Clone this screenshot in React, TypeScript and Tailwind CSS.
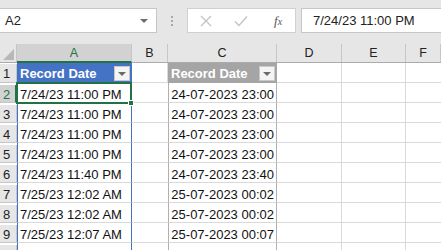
import React from "react";

const font = "font-['Liberation_Sans',Arial,sans-serif]";

const letters = ["A", "B", "C", "D", "E", "F"];

const data: [string, string][] = [
  ["7/24/23 11:00 PM", "24-07-2023 23:00"],
  ["7/24/23 11:00 PM", "24-07-2023 23:00"],
  ["7/24/23 11:00 PM", "24-07-2023 23:00"],
  ["7/24/23 11:00 PM", "24-07-2023 23:00"],
  ["7/24/23 11:40 PM", "24-07-2023 23:40"],
  ["7/25/23 12:02 AM", "25-07-2023 00:02"],
  ["7/25/23 12:02 AM", "25-07-2023 00:02"],
  ["7/25/23 12:07 AM", "25-07-2023 00:07"],
  ["7/25/23 12:07 AM", ""],
];

function Caret({ className = "" }: { className?: string }) {
  return (
    <svg width="8" height="4" viewBox="0 0 8 4" className={className}>
      <polygon points="0,0 8,0 4,4" fill="currentColor" />
    </svg>
  );
}

function FilterButton() {
  return (
    <div className="ml-auto mr-[2px] mb-[2px] w-[16px] h-[15px] bg-[#f4f4f4] border border-[#c8c8c8] flex items-center justify-center text-[#6a6a6a]">
      <Caret />
    </div>
  );
}

function TopBar() {
  return (
    <div className="h-[44px] bg-[#e6e6e6] flex items-start pt-[8px]">
      <div className="w-[157px] h-[25px] bg-white border-y border-r border-[#c6c6c6] flex items-center pl-[5px] pr-[8px]">
        <span className="text-[13px] text-[#222]">A2</span>
        <Caret className="ml-auto text-[#6d6d6d]" />
      </div>
      <div className="w-[30px] h-[25px] flex flex-col items-center justify-center gap-[2px]">
        <div className="w-[2px] h-[2px] bg-[#a8a8a8]" />
        <div className="w-[2px] h-[2px] bg-[#a8a8a8]" />
        <div className="w-[2px] h-[2px] bg-[#a8a8a8]" />
      </div>
      <div className="w-[109px] h-[25px] bg-white border border-[#d0d0d0] flex items-center">
        <svg width="12" height="12" viewBox="0 0 12 12" className="ml-[12px]">
          <path d="M1 1 L11 11 M11 1 L1 11" stroke="#c4c4c4" strokeWidth="1.4" />
        </svg>
        <svg width="14" height="12" viewBox="0 0 14 12" className="ml-[22px]">
          <path d="M1 6.5 L5 10.5 L13 1.5" stroke="#c4c4c4" strokeWidth="1.4" fill="none" />
        </svg>
        <span className="ml-[26px] text-[13px] italic font-['Liberation_Serif',serif] text-[#555]">
          f<span className="text-[10px]">x</span>
        </span>
      </div>
      <div className="ml-[5px] flex-1 h-[25px] bg-white border-y border-l border-[#c6c6c6] flex items-center pl-[11px]">
        <span className="text-[13px] text-[#222]">7/24/23 11:00 PM</span>
      </div>
    </div>
  );
}

function HeaderRow() {
  const widths = ["w-[115px]", "w-[36px]", "w-[109px]", "w-[65px]", "w-[64px]", "flex-1"];
  return (
    <div className="flex h-[19px] bg-[#e6e6e6] border-b border-[#ababab] text-[12.5px] leading-[19px]">
      <div className="w-[17px] border-r border-[#c6c6c6] relative">
        <svg width="11" height="11" viewBox="0 0 11 11" className="absolute right-[2px] bottom-[2px]">
          <polygon points="11,0 11,11 0,11" fill="#b8b8b8" />
        </svg>
      </div>
      {letters.map((l, i) =>
        i === 0 ? (
          <div key={l} className={`${widths[i]} bg-[#d2d2d2] border-r border-[#c6c6c6] border-b-2 border-b-[#217346] text-center text-[#217346] -mb-px`}>
            {l}
          </div>
        ) : (
          <div key={l} className={`${widths[i]} border-r border-[#c6c6c6] text-center text-[#222]`}>
            {l}
          </div>
        )
      )}
    </div>
  );
}

function RowHead({ n, active }: { n: number; active?: boolean }) {
  return active ? (
    <div className="w-[17px] bg-[#d2d2d2] border-b border-[#c6c6c6] border-r-2 border-r-[#217346] pl-[3px] text-[#217346]">
      {n}
    </div>
  ) : (
    <div className="w-[17px] bg-[#e6e6e6] border-b border-r border-[#c6c6c6] pl-[3px] text-[#222]">{n}</div>
  );
}

function Grid() {
  return (
    <div className="text-[13px] leading-[19px]">
      <div className="flex h-[20px] pt-[1px]">
        <RowHead n={1} />
        <div className="w-[115px] bg-[#4472c4] text-white font-bold pl-[3px] flex items-end -mt-[1px] pt-[1px]">
          <span className="self-start">Record Date</span>
          <FilterButton />
        </div>
        <div className="w-[36px] border-b border-r border-[#d9d9d9] -mt-[1px]" />
        <div className="w-[109px] bg-[#a5a5a5] text-white font-bold pl-[3px] flex items-end -mt-[1px] pt-[1px]">
          <span className="self-start">Record Date</span>
          <FilterButton />
        </div>
        <div className="w-[65px] border-b border-r border-[#d9d9d9] -mt-[1px]" />
        <div className="w-[64px] border-b border-r border-[#d9d9d9] -mt-[1px]" />
        <div className="flex-1 border-b border-[#d9d9d9] -mt-[1px]" />
      </div>
      {data.map(([a, c], i) => (
        <div key={i} className="flex h-[20px] pt-[2px] text-[#111]">
          <RowHead n={i + 2} active={i === 0} />
          <div className="w-[115px] border-x border-x-[#4472c4] border-b border-b-[#d9d9d9] pl-[2px] -mt-[2px] pt-[2px] relative whitespace-nowrap">
            {a}
            {i === 0 && (
              <div className="absolute -left-[2px] -top-[1px] w-[116px] h-[22px] border-2 border-[#217346] z-10">
                <div className="absolute -right-[4px] -bottom-[4px] w-[6px] h-[6px] bg-[#217346] border border-white" />
              </div>
            )}
          </div>
          <div className="w-[36px] border-b border-[#d9d9d9] -mt-[2px]" />
          <div className="w-[109px] border-x border-[#b0b0b0] border-b border-b-[#d9d9d9] text-right pr-[2px] -mt-[2px] pt-[2px] whitespace-nowrap">
            {c}
          </div>
          <div className="w-[65px] border-b border-r border-[#d9d9d9] -mt-[2px]" />
          <div className="w-[64px] border-b border-r border-[#d9d9d9] -mt-[2px]" />
          <div className="flex-1 border-b border-[#d9d9d9] -mt-[2px]" />
        </div>
      ))}
    </div>
  );
}

export default function App() {
  return (
    <div className={`w-[441px] h-[250px] overflow-hidden bg-white ${font}`}>
      <TopBar />
      <HeaderRow />
      <Grid />
    </div>
  );
}
